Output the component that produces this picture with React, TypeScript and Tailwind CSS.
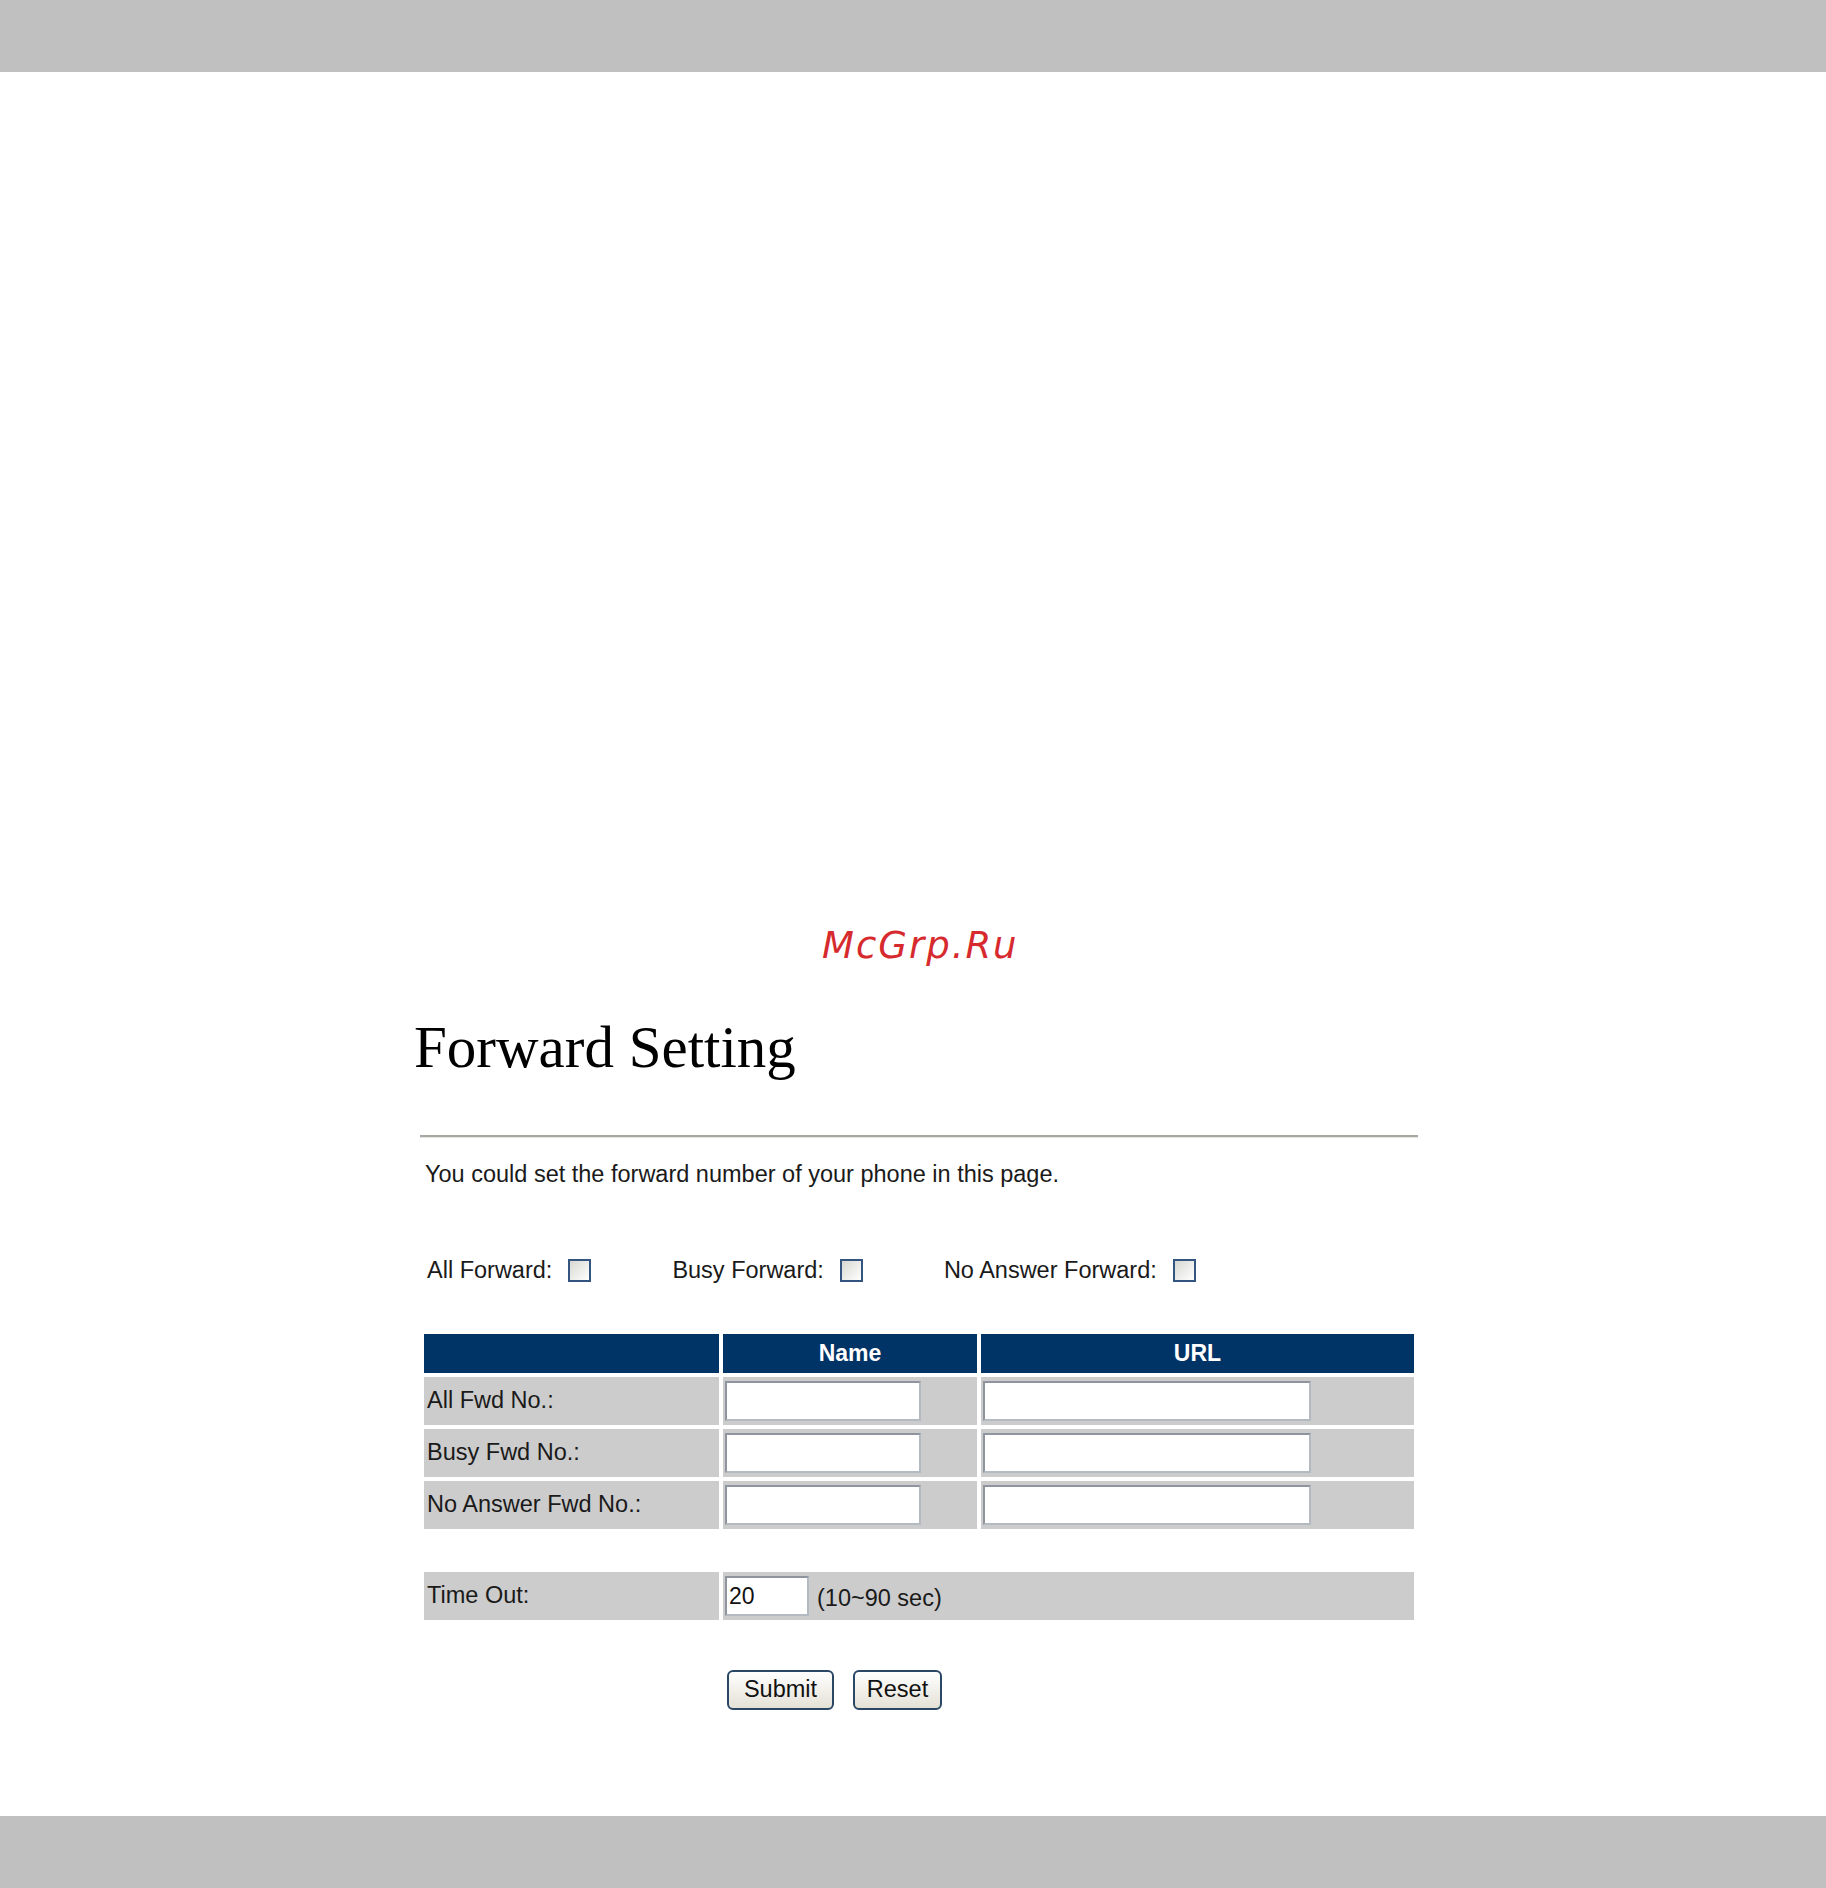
import React from "react";

const sans = { fontFamily: '"Liberation Sans", Arial, sans-serif' };

function Checkbox() {
  return (
    <span className="inline-block h-[23px] w-[23px] shrink-0 border-2 border-[#33557f] bg-linear-to-br from-[#d8d8d2] to-white" />
  );
}

function TextInput({ w, value }: { w: string; value?: string }) {
  return (
    <input
      type="text"
      defaultValue={value}
      className={`${w} ml-[2px] block h-[40px] border-2 border-t-[#8e959e] border-l-[#8e959e] border-r-[#b4bac2] border-b-[#b4bac2] bg-white pl-[2px] text-[23px] text-[#111] outline-none`}
      style={sans}
    />
  );
}

export default function App() {
  const rows = ["All Fwd No.:", "Busy Fwd No.:", "No Answer Fwd No.:"];
  return (
    <div className="flex h-[1888px] w-full flex-col bg-white text-[#1a1a1a]" style={sans}>
      <div className="h-[72px] shrink-0 bg-[#c0c0c0]" />
      <main className="flex flex-1 flex-col">
        <div
          className="ml-[822px] mt-[852px] text-[37px] italic leading-[43px] tracking-[2px] text-[#d62a2e]"
          style={{ fontFamily: '"DejaVu Sans", sans-serif' }}
        >
          McGrp.Ru
        </div>

        <h1
          className="ml-[414px] mt-[48px] text-[59px] font-normal leading-[64px] text-black"
          style={{ fontFamily: '"Liberation Serif", "Times New Roman", serif' }}
        >
          Forward Setting
        </h1>

        <div className="ml-[420px] mt-[56px] w-[998px] border-t-2 border-b border-t-[#a8a8a2] border-b-[#e4e4e0]" />

        <p className="ml-[425px] mt-[23px] text-[23.5px] leading-[27px]">
          You could set the forward number of your phone in this page.
        </p>

        <div className="ml-[427px] mt-[69px] flex h-[27px] items-center gap-[81px] text-[23.5px] leading-[27px]">
          <label className="flex items-center gap-[16px]">
            <span>All Forward:</span>
            <Checkbox />
          </label>
          <label className="flex items-center gap-[16px]">
            <span>Busy Forward:</span>
            <Checkbox />
          </label>
          <label className="flex items-center gap-[16px]">
            <span>No Answer Forward:</span>
            <Checkbox />
          </label>
        </div>

        <table className="ml-[420px] mt-[46px] w-[998px] table-fixed border-separate border-spacing-[4px]">
          <thead>
            <tr className="h-[39px] bg-[#003366] text-[23px] font-bold text-white">
              <th className="w-[295px] p-0" />
              <th className="w-[254px] p-0 text-center">Name</th>
              <th className="w-[433px] p-0 text-center">URL</th>
            </tr>
          </thead>
          <tbody>
            {rows.map((r) => (
              <tr key={r} className="h-[48px] bg-[#cccccc]">
                <td className="p-0 pl-[3px] text-[23.5px]">{r}</td>
                <td className="p-0">
                  <TextInput w="w-[196px]" />
                </td>
                <td className="p-0">
                  <TextInput w="w-[328px]" />
                </td>
              </tr>
            ))}
          </tbody>
        </table>

        <table className="ml-[420px] mt-[35px] w-[998px] table-fixed border-separate border-spacing-[4px]">
          <tbody>
            <tr className="h-[48px] bg-[#cccccc]">
              <td className="w-[295px] p-0 pl-[3px] text-[23.5px]">Time Out:</td>
              <td className="w-[691px] p-0">
                <div className="flex items-center gap-[8px]">
                  <TextInput w="w-[84px]" value="20" />
                  <span className="mt-[6px] text-[23.5px]">(10~90 sec)</span>
                </div>
              </td>
            </tr>
          </tbody>
        </table>

        <div className="ml-[727px] mt-[46px] flex gap-[19px]">
          <button className="h-[40px] w-[107px] rounded-[6px] border-2 border-[#2a4766] bg-linear-to-b from-white to-[#e4e1d6] text-[23.5px] text-[#111]">
            Submit
          </button>
          <button className="h-[40px] w-[89px] rounded-[6px] border-2 border-[#2a4766] bg-linear-to-b from-white to-[#e4e1d6] text-[23.5px] text-[#111]">
            Reset
          </button>
        </div>
      </main>
      <div className="h-[72px] shrink-0 bg-[#c0c0c0]" />
    </div>
  );
}
